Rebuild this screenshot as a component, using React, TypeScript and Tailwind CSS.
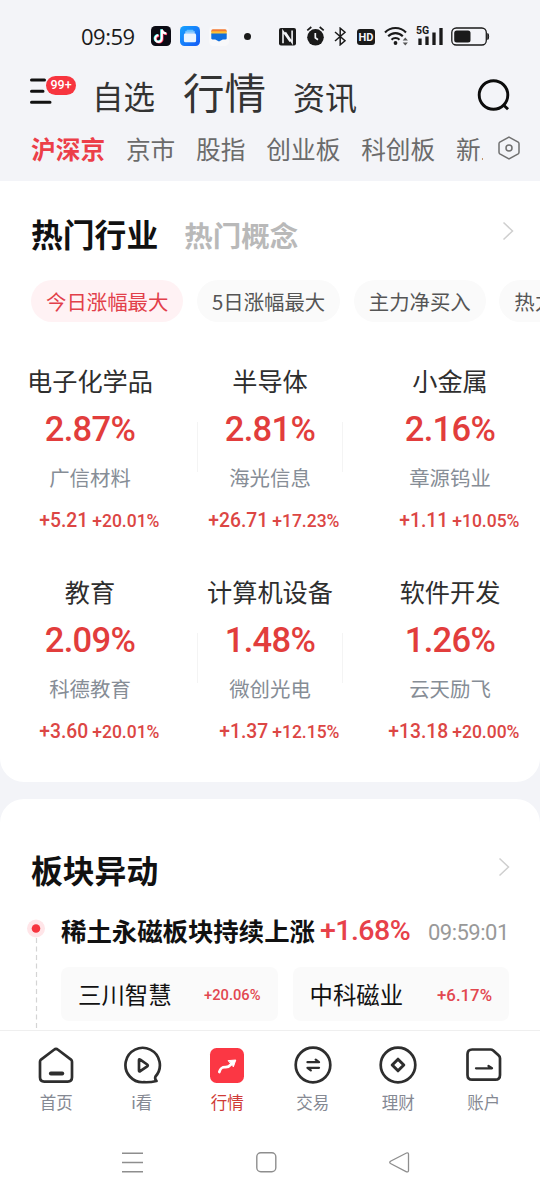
import type { ReactNode } from 'react'

type Sector = {
  name: string
  change: string
  stock: string
  delta: string
  pct: string
}

const sectors: Sector[] = [
  { name: '电子化学品', change: '2.87%', stock: '广信材料', delta: '+5.21', pct: '+20.01%' },
  { name: '半导体', change: '2.81%', stock: '海光信息', delta: '+26.71', pct: '+17.23%' },
  { name: '小金属', change: '2.16%', stock: '章源钨业', delta: '+1.11', pct: '+10.05%' },
  { name: '教育', change: '2.09%', stock: '科德教育', delta: '+3.60', pct: '+20.01%' },
  { name: '计算机设备', change: '1.48%', stock: '微创光电', delta: '+1.37', pct: '+12.15%' },
  { name: '软件开发', change: '1.26%', stock: '云天励飞', delta: '+13.18', pct: '+20.00%' },
]

const markets = ['沪深京', '京市', '股指', '创业板', '科创板', '新三板']

function StatusBar() {
  return (
    <div className="flex h-[72px] shrink-0 items-center pl-[81px] text-[#1a1a1a]">
      <span className="w-[70px] font-['Open_Sans','Noto_Sans',sans-serif] text-[22px] leading-none tracking-[-0.5px]">09:59</span>
      <svg className="h-5 w-5" viewBox="0 0 20 20">
        <rect width="20" height="20" rx="4.5" fill="#0b0b14" />
        <g fill="none" strokeWidth="2.1">
          <path d="M10.8 3.5v9.1a3.3 3.3 0 1 1-3.3-3.3M10.8 3.5c.4 2.3 2 3.8 4.6 4" stroke="#25f4ee" transform="translate(-.6 -.3)" />
          <path d="M10.8 3.5v9.1a3.3 3.3 0 1 1-3.3-3.3M10.8 3.5c.4 2.3 2 3.8 4.6 4" stroke="#fe2c55" transform="translate(.7 .6)" />
          <path d="M10.8 3.5v9.1a3.3 3.3 0 1 1-3.3-3.3M10.8 3.5c.4 2.3 2 3.8 4.6 4" stroke="#fff" />
        </g>
      </svg>
      <svg className="ml-[9px] h-5 w-5" viewBox="0 0 20 20">
        <defs>
          <linearGradient id="files" x1="0" y1="0" x2="1" y2="1">
            <stop offset="0" stopColor="#16a4ff" />
            <stop offset="1" stopColor="#1459f5" />
          </linearGradient>
        </defs>
        <rect width="20" height="20" rx="4.5" fill="url(#files)" />
        <rect x="6.5" y="3.8" width="7" height="1.5" rx=".7" fill="#5fc0ff" />
        <rect x="5" y="5.2" width="10" height="1.7" rx=".8" fill="#8dcfff" />
        <rect x="3.9" y="7.3" width="12.2" height="9" rx="1.6" fill="#e9f5ff" />
      </svg>
      <svg className="ml-[9px] h-5 w-5" viewBox="0 0 20 20">
        <rect width="20" height="20" rx="4.5" fill="#f8f8fa" />
        <path d="M3.8 3.2h12.4a1.5 1.5 0 0 1 1.5 1.5V6H2.300V4.700a1.500 1.500 0 0 1 1.500-1.500z" fill="#f47b35" />
        <path d="M2.3 5.3h15.4v3H2.3z" fill="#ffc233" />
        <path d="M2.3 7.5h15.4v4.7c0 .8-.5 1.2-1.2 1.2h-2.7L10 15.500l-3.800-2.100H3.500c-.7 0-1.200-.4-1.200-1.200z" fill="#126fdd" />
      </svg>
      <span className="ml-[15px] h-[7px] w-[7px] rounded-full bg-[#1a1a1a]" />
      <svg className="ml-[28px] mt-[1px] h-[18px] w-[17px]" viewBox="0 0 17 18">
        <rect width="17" height="17.5" rx="2" fill="#1a1a1a" />
        <path d="M4 15.3V3.2l7.2 10.3M13.1 2.5v12L6.3 4.3" fill="none" stroke="#f3f4f8" strokeWidth="1.6" />
      </svg>
      <svg className="ml-[10px] h-5 w-[19px]" viewBox="0 0 19 20">
        <circle cx="9.5" cy="11.3" r="8.3" fill="#1a1a1a" />
        <path d="M1.3 4.4L5.3 1M17.7 4.4L13.7 1" stroke="#1a1a1a" strokeWidth="1.7" />
        <path d="M9.3 7v4.8l2.700 1.900" stroke="#f3f4f8" strokeWidth="1.7" fill="none" />
      </svg>
      <svg className="ml-[9px] mt-[1px] h-[19px] w-[13px]" viewBox="0 0 13 19">
        <path d="M1 5l10 8.700L6.200 17.800V1.200L11 5.200 1 14" fill="none" stroke="#1a1a1a" strokeWidth="1.5" />
      </svg>
      <span className="ml-[10px] mt-[2px] flex h-[16px] w-[18px] items-center justify-center rounded-[3px] bg-[#1a1a1a] font-['Roboto',sans-serif] text-[11px] leading-none font-bold text-[#f3f4f8]">
        HD
      </span>
      <svg className="ml-[9px] h-5 w-[25px]" viewBox="0 0 25 20">
        <path d="M1 6.500a14.500 14.500 0 0 1 21 0M4.200 10.300a10 10 0 0 1 14.600 0M7.500 13.700a5.700 5.700 0 0 1 8 0" fill="none" stroke="#1a1a1a" strokeWidth="2.1" />
        <circle cx="11.5" cy="17" r="1.9" fill="#1a1a1a" />
        <path d="M18.700 14.500l2.600-3 2.600 3zM18.700 16.500l2.600 3 2.600-3z" fill="#555" />
      </svg>
      <div className="ml-[7px] grid h-5 w-[27px]">
        <svg className="h-5 w-[27px] [grid-area:1/1]" viewBox="0 0 27 20">
          <path d="M4 12.500V19M11 10.500V19M18 6.500V19M25 2v17" stroke="#1a1a1a" strokeWidth="3.3" />
        </svg>
        <span className="font-['Roboto',sans-serif] text-[10.5px] leading-none font-bold [grid-area:1/1]">5G</span>
      </div>
      <svg className="ml-[8px] h-[19px] w-[39px]" viewBox="0 0 39 19">
        <rect x=".8" y="1" width="34.5" height="17" rx="4.5" fill="none" stroke="#1a1a1a" strokeWidth="1.3" />
        <rect x="3.2" y="3.5" width="16.3" height="12" rx="2.5" fill="#1a1a1a" />
        <path d="M36.800 6.500c1.100.7 1.100 5.300 0 6z" fill="#1a1a1a" stroke="#1a1a1a" />
      </svg>
    </div>
  )
}

function TopTabs() {
  return (
    <header className="flex h-[48px] shrink-0 items-center pl-[30px] leading-none text-[#333]">
      <div className="mt-[-12px] grid h-7 w-[46px]">
        <svg className="mt-[1px] h-7 w-[22px] [grid-area:1/1]" viewBox="0 0 22 28">
          <path d="M1.5 3h13M1.5 14.2h11.5M1.5 25.2h18.5" stroke="#111" strokeWidth="3" strokeLinecap="round" />
        </svg>
        <span className="ml-[16px] flex h-[19px] w-[30px] items-center justify-center rounded-full bg-[#f7353f] font-['Roboto',sans-serif] text-[12.5px] font-medium text-white [grid-area:1/1]">
          99+
        </span>
      </div>
      <span className="ml-[16px] text-[31.5px]">自选</span>
      <span className="ml-[28px] mt-[-9px] text-[41.5px]">行情</span>
      <span className="ml-[27px] text-[32px]">资讯</span>
      <svg className="ml-[118px] mt-[-3px] h-9 w-9" viewBox="0 0 36 36">
        <circle cx="18.5" cy="18" r="14.3" fill="none" stroke="#0c0c0c" strokeWidth="2.9" />
        <path d="M28.500 28l4.500 4.300" stroke="#0c0c0c" strokeWidth="2.9" />
      </svg>
    </header>
  )
}

function MarketTabs() {
  return (
    <nav className="flex h-[61px] shrink-0 items-center pl-[31px] text-[24.7px] text-[#6b6b6b]">
      <div className="mt-[-5px] flex h-10 w-[452px] items-center gap-[20.8px] overflow-hidden leading-[38px] whitespace-nowrap">
        {markets.map((m, i) => (
          <span key={m} className={i === 0 ? 'font-bold text-[#ec3f49]' : ''}>
            {m}
          </span>
        ))}
      </div>
      <svg className="ml-[14px] mt-[-5px] h-6 w-6" viewBox="0 0 24 24">
        <path d="M12 1.200l9.200 5q.8.500.8 1.500v8.600q0 1-.8 1.500l-9.200 5-9.200-5q-.8-.5-.8-1.500V7.700q0-1 .8-1.500z" fill="none" stroke="#707070" strokeWidth="1.5" />
        <circle cx="12" cy="12" r="3" fill="none" stroke="#707070" strokeWidth="1.5" />
      </svg>
    </nav>
  )
}

function Chevron() {
  return (
    <svg className="h-5 w-3" viewBox="0 0 12 20">
      <path d="M1.500 1.500L10.500 10l-9 8.500" fill="none" stroke="#cfcfcf" strokeWidth="1.5" />
    </svg>
  )
}

function Pill({ active, children }: { active?: boolean; children: ReactNode }) {
  return (
    <span
      className={`flex h-[42px] shrink-0 items-center rounded-full px-[15px] text-[20.4px] leading-none ${
        active ? 'bg-[#fff2f4] text-[#e2404a]' : 'bg-[#fafafa] text-[#555]'
      }`}
    >
      {children}
    </span>
  )
}

function SectorCell({ item, divided }: { item: Sector; divided: boolean }) {
  return (
    <div className="grid h-[211px] w-[180px] leading-none">
      {divided && <i className="mx-[17px] mt-[73px] h-[50px] border-x border-[#f4f4f4] [grid-area:1/1]" />}
      <div className="flex flex-col items-center [grid-area:1/1]">
        <span className="flex h-[63px] items-center text-[25.2px] text-[#2e2e2e]">{item.name}</span>
        <span className="flex h-[35px] items-center font-['Roboto',sans-serif] text-[34.5px] font-medium tracking-[-0.7px] text-[#e23d3c]">
          {item.change}
        </span>
        <span className="flex h-[61px] items-center text-[20.4px] text-[#868d96]">{item.stock}</span>
        <span className="mt-[3px] flex h-[22px] w-full items-baseline justify-end gap-[4px] pr-[20.5px] font-['Roboto',sans-serif] font-medium whitespace-nowrap text-[#dc4644]">
          <span className="text-[19.3px]">{item.delta}</span>
          <span className="text-[17.5px]">{item.pct}</span>
        </span>
      </div>
    </div>
  )
}

function HotSectors() {
  return (
    <section className="h-[601px] shrink-0 overflow-hidden rounded-b-[24px] bg-white">
      <div className="flex h-[99px] items-center pl-[31px] leading-none">
        <h2 className="mt-[6px] text-[31.8px] font-bold text-[#111]">热门行业</h2>
        <span className="ml-[26px] mt-[9px] text-[28.5px] font-bold text-[#b9b9b9]">热门概念</span>
        <span className="mr-[26px] ml-auto">
          <Chevron />
        </span>
      </div>
      <div className="flex gap-[13.6px] overflow-hidden pl-[31px] whitespace-nowrap">
        <Pill active>今日涨幅最大</Pill>
        <Pill>5日涨幅最大</Pill>
        <Pill>主力净买入</Pill>
        <Pill>热力值</Pill>
      </div>
      <div className="mt-[27px] grid grid-cols-3">
        {sectors.map((s, i) => (
          <SectorCell key={s.name} item={s} divided={i % 3 === 1} />
        ))}
      </div>
    </section>
  )
}

function MoverTile({ name, pct }: { name: string; pct: string }) {
  const size = pct.length > 6 ? 'text-[14.7px]' : 'text-[16.8px]'
  return (
    <div className="flex h-[54px] w-[216.5px] items-center justify-between rounded-[8px] bg-[#fafafa] px-[17px] leading-none">
      <span className="mt-[2px] text-[23.4px] text-[#111]">{name}</span>
      <span className={`mt-[2px] font-['Roboto',sans-serif] font-medium text-[#e2474f] ${size}`}>{pct}</span>
    </div>
  )
}

function SectorMoves() {
  return (
    <section className="mt-[17px] flex h-[231px] shrink-0 flex-col overflow-hidden rounded-t-[24px] bg-white leading-none">
      <div className="flex h-[110px] shrink-0 items-center pl-[31px]">
        <h2 className="mt-[31px] text-[31.8px] font-bold text-[#111]">板块异动</h2>
        <span className="mt-[26px] mr-[30px] ml-auto">
          <Chevron />
        </span>
      </div>
      <div className="flex flex-1">
        <svg className="ml-[26px] h-[122px] w-5" viewBox="0 0 20 122">
          <path d="M10.500 29v93" stroke="#d4d4d4" strokeWidth="1.2" strokeDasharray="5 3.5" />
          <circle cx="10" cy="19.5" r="9" fill="#ffe5e8" />
          <circle cx="10" cy="19.5" r="4.3" fill="#f7353f" />
        </svg>
        <div className="ml-[15px]">
          <div className="flex h-[44px] items-center whitespace-nowrap">
            <span className="text-[25.4px] font-bold text-[#111]">稀土永磁板块持续上涨</span>
            <span className="ml-[5px] w-[108px] font-['Roboto',sans-serif] text-[28.5px] font-medium tracking-[-0.5px] text-[#e7414a]">
              +1.68%
            </span>
            <span className="mt-[3px] font-['Roboto',sans-serif] text-[22px] tracking-[-0.5px] text-[#999]">09:59:01</span>
          </div>
          <div className="mt-[14px] flex gap-[15px]">
            <MoverTile name="三川智慧" pct="+20.06%" />
            <MoverTile name="中科磁业" pct="+6.17%" />
          </div>
        </div>
      </div>
    </section>
  )
}

function TabItem({ label, active, children }: { label: string; active?: boolean; children: ReactNode }) {
  return (
    <div className="flex flex-1 flex-col items-center">
      <svg
        className="mt-[14px] h-10 w-10"
        viewBox="0 0 40 40"
        fill="none"
        stroke="#2e2e2e"
        strokeWidth="2.7"
        strokeLinejoin="round"
        strokeLinecap="round"
      >
        {children}
      </svg>
      <span className={`mt-[9px] text-[16.5px] leading-none ${active ? 'text-[#cf3a36]' : 'text-[#858993]'}`}>{label}</span>
    </div>
  )
}

function BottomTabs() {
  return (
    <nav className="flex h-[95px] shrink-0 border-t border-[#efefef] bg-white px-[13.5px]">
      <TabItem label="首页">
        <path d="M18 4.700q2-1.700 4 0l13 9.900q1 .9 1 2.200v15.500q0 4.300-4.300 4.300H8.300Q4 36.600 4 32.300V16.800q0-1.300 1-2.200z" />
        <path d="M14.800 28.500h11.500" strokeWidth="3.8" />
      </TabItem>
      <TabItem label="i看">
        <path d="M33.500 31.500A17.200 17.200 0 1 0 22 37.200q6.500.3 12.500-1.200-2-2-1-4.500z" />
        <path d="M17 15v10.500q0 1.300 1.200.7l7-4.900q1.200-.9 0-1.800l-7-4.900q-1.200-.7-1.200.4z" />
      </TabItem>
      <TabItem label="行情" active>
        <rect x="3" y="3" width="34" height="35" rx="6.5" fill="#fb3744" stroke="none" />
        <path d="M12.300 27c1.500-4.800 3.700-5 6.200-4.900 4.700.2 4.200-2.100 7.500-5.100" stroke="#fff" />
        <path d="M21.500 15.600l7.300-.6-2.300 6.500z" fill="#fff" stroke="#fff" strokeWidth="1" />
      </TabItem>
      <TabItem label="交易">
        <circle cx="20" cy="20" r="17.3" />
        <path d="M14.500 17.200h11.500l-3.300-2.500M26 22.800H14.500l3.300 2.500" strokeWidth="2.3" />
      </TabItem>
      <TabItem label="理财">
        <circle cx="20" cy="20" r="17.3" />
        <path d="M20 14.200l5.800 5.800-5.800 5.800-5.800-5.800z" strokeWidth="3" />
      </TabItem>
      <TabItem label="账户">
        <path d="M8.200 4.500h18.300q1.500 0 2.700 1l5.300 4.800q1.500 1.300 1.500 3V30q0 4.700-4.700 4.700H8.200Q3.500 34.700 3.500 30V9.200q0-4.700 4.700-4.700z" />
        <path d="M12 23.300h16l-3.500-2.300" strokeWidth="2.3" />
      </TabItem>
    </nav>
  )
}

function SystemNav() {
  return (
    <div className="flex flex-1 bg-white pl-[121px]">
      <svg className="mt-[25px] h-6 w-[22px]" viewBox="0 0 22 24">
        <path d="M1 3.200h21M1 12.500h21M1 21.800h21" stroke="#8e8e8e" strokeWidth="1.4" />
      </svg>
      <svg className="ml-[111px] mt-[25px] h-6 w-6" viewBox="0 0 24 24">
        <rect x="2.8" y="2.8" width="19" height="19" rx="4" fill="none" stroke="#8e8e8e" strokeWidth="1.4" />
      </svg>
      <svg className="ml-[110px] mt-[25px] h-6 w-6" viewBox="0 0 24 24">
        <path d="M18.500 3L2.500 11.200q-1.500 1.300 0 2.300L18.500 21.800q2 .6 2-1.200V4.300q0-1.900-2-1.300z" fill="none" stroke="#8e8e8e" strokeWidth="1.3" />
      </svg>
    </div>
  )
}

export default function App() {
  return (
    <div className="flex h-[1200px] w-[540px] flex-col overflow-hidden bg-[#f3f4f8] font-['Noto_Sans_CJK_SC',sans-serif]">
      <StatusBar />
      <TopTabs />
      <MarketTabs />
      <HotSectors />
      <SectorMoves />
      <BottomTabs />
      <SystemNav />
    </div>
  )
}
